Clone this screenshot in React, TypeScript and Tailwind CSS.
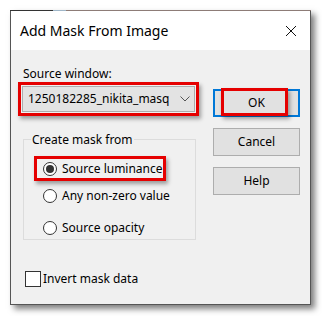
const Radio = ({ checked }: { checked?: boolean }) => (
  <span className="w-[14px] h-[14px] rounded-full border border-[#333] bg-white flex items-center justify-center shrink-0">
    {checked && <span className="w-[8px] h-[8px] rounded-full bg-[#333]" />}
  </span>
);

const App = () => {
  return (
    <div className="w-[322px] h-[316px] bg-white font-['Noto_Sans',sans-serif] text-[12px] text-black pt-[10px] pl-[10px]">
      <div className="w-[301px] h-[295px] border-x border-b border-[#555] bg-[#f0f0f0] flex flex-col shadow-[4px_4px_6px_rgba(0,0,0,0.5)]">
        {/* top edge */}
        <div className="flex h-px -mx-px">
          <div className="w-[43px] bg-[#333]" />
          <div className="w-[13px] bg-[#9fb6c8]" />
          <div className="flex-1 bg-[#8d7c77]" />
        </div>
        {/* title bar */}
        <div className="h-[39px] bg-white flex items-center justify-between pl-[9px] pr-[13px]">
          <span className="text-[14px] leading-none">Add Mask From Image</span>
          <svg width="12" height="12" viewBox="0 0 12 12">
            <path d="M1 1 L11 11 M11 1 L1 11" stroke="#111" strokeWidth="1" />
          </svg>
        </div>
        {/* body */}
        <div className="flex flex-1 pl-[7px] whitespace-nowrap">
          <div className="w-[181px] flex flex-col pt-[15px]">
            <div className="ml-[5px] h-[17px] leading-[17px]">Source window:</div>
            <div className="h-[34px] border-[3px] border-[#e50000] p-[1px] shadow-[2px_3px_4px_rgba(0,0,0,0.35)]">
              <div className="h-full border border-[#adadad] bg-[#e3e3e3] flex items-center pl-[5px] pr-[4px]">
                <span>1250182285_nikita_masq</span>
                <div className="flex-1 flex justify-end">
                  <svg width="10" height="6" viewBox="0 0 10 6">
                    <path d="M0.5 0.5 L5 5 L9.5 0.5" stroke="#555" strokeWidth="1" fill="none" />
                  </svg>
                </div>
              </div>
            </div>
            <div className="ml-[5px] mt-[23px] w-[173px] h-[101px] border border-[#dcdcdc] flex flex-col">
              <div className="-mt-[9px] ml-[7px] w-fit px-[1px] bg-[#f0f0f0] leading-[17px]">Create mask from</div>
              <div className="mt-[8px] ml-[10px] w-[132px] h-[25px] border-[3px] border-[#e50000] flex items-center gap-[5px] pl-[6px] shadow-[2px_3px_4px_rgba(0,0,0,0.35)]">
                <Radio checked />
                <span>Source luminance</span>
              </div>
              <div className="mt-[5px] h-[20px] flex items-center gap-[5px] pl-[19px]">
                <Radio />
                <span>Any non-zero value</span>
              </div>
              <div className="mt-[12px] h-[20px] flex items-center gap-[5px] pl-[19px]">
                <Radio />
                <span>Source opacity</span>
              </div>
            </div>
            <div className="mt-[29px] ml-[7px] h-[20px] flex items-center gap-[2px]">
              <span className="w-[16px] h-[16px] border border-[#333] bg-white shrink-0" />
              <span>Invert mask data</span>
            </div>
          </div>
          <div className="ml-[14px] w-[87px] flex flex-col gap-[11px] pt-[39px]">
            <div className="relative h-[28px] border-2 border-[#0078d7] bg-[#e1e1e1] flex items-center justify-center">
              <span>OK</span>
              <div className="absolute left-[6px] right-[10px] -top-[3px] bottom-[-1px] border-[3px] border-[#e50000] shadow-[2px_3px_4px_rgba(0,0,0,0.35)]" />
            </div>
            <div className="h-[28px] border border-[#adadad] bg-[#e1e1e1] flex items-center justify-center">Cancel</div>
            <div className="h-[28px] border border-[#adadad] bg-[#e1e1e1] flex items-center justify-center">Help</div>
          </div>
        </div>
      </div>
    </div>
  );
};

export default App;
